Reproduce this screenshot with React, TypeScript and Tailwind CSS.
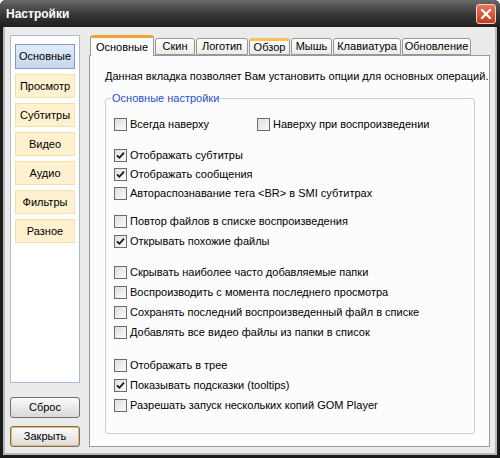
import React from 'react';

const navItems = ['Основные', 'Просмотр', 'Субтитры', 'Видео', 'Аудио', 'Фильтры', 'Разное'];

const tabs = [
  { label: 'Основные', w: 'w-[64px]', active: true },
  { label: 'Скин', w: 'w-[40px]' },
  { label: 'Логотип', w: 'w-[52px]' },
  { label: 'Обзор', w: 'w-[41px]', hover: true },
  { label: 'Мышь', w: 'w-[41px]' },
  { label: 'Клавиатура', w: 'w-[68px]' },
  { label: 'Обновление', w: 'w-[69px]' },
];

function Box({ checked }: { checked?: boolean }) {
  return (
    <span className="w-[13px] h-[13px] border border-[#6b6b6b] bg-linear-to-br from-[#dedede] to-[#fbfbfb] flex items-center justify-center shrink-0">
      {checked && (
        <svg width="9" height="9" viewBox="0 0 9 9">
          <path d="M1 4.3 L3.4 6.8 L8 1.6" stroke="#141414" strokeWidth="1.7" fill="none" />
        </svg>
      )}
    </span>
  );
}

function Check({ label, checked, className = '' }: { label: string; checked?: boolean; className?: string }) {
  return (
    <label className={`flex items-center gap-[3px] ${className}`}>
      <Box checked={checked} />
      <span className="whitespace-nowrap">{label}</span>
    </label>
  );
}

export default function App() {
  return (
    <div className="w-[500px] h-[458px] bg-white font-['Liberation_Sans',Arial,sans-serif] text-[11px] text-black">
      <div className="w-full h-full bg-[#1b1b1b] rounded-t-[6px] flex flex-col">
        {/* Title bar */}
        <div className="h-[27px] shrink-0 rounded-t-[6px] bg-linear-to-b from-[#6a6a6a] via-[#3a3a3a] to-[#1e1e1e] flex items-center justify-between pl-[6px] pr-[4px]">
          <span className="text-white font-bold text-[12px]">Настройки</span>
          <button className="w-[20px] h-[20px] rounded-[3px] border border-[#f2d0c6] bg-linear-to-b from-[#e9765a] to-[#c7381d] flex items-center justify-center">
            <svg width="12" height="12" viewBox="0 0 12 12">
              <path d="M2 2 L10 10 M10 2 L2 10" stroke="white" strokeWidth="2.4" strokeLinecap="round" />
            </svg>
          </button>
        </div>

        {/* Body */}
        <div className="flex-1 mx-[3px] mb-[3px] border-2 border-t-0 border-[#b8b8b8] bg-[#ebebeb] flex pt-[8px] pb-[6px] pl-[5px] pr-[5px]">
          {/* Left column */}
          <div className="w-[70px] shrink-0 flex flex-col">
            <div className="flex-1 bg-white border border-[#a9bcd4] px-[4px] pt-[8px] flex flex-col gap-[5px]">
              {navItems.map((item, i) => (
                <div
                  key={item}
                  className={`flex items-center justify-center border ${
                    i === 0
                      ? 'h-[25px] bg-linear-to-b from-[#e3ebf7] to-[#c6d6ee] border-[#7d9bc4]'
                      : 'h-[24px] bg-[#fdf1cf] border-[#f6dfa7]'
                  }`}
                >
                  {item}
                </div>
              ))}
            </div>
            <button className="mt-[14px] h-[21px] rounded-[3px] border border-[#707070] bg-linear-to-b from-[#fbfbfb] to-[#d9d9d9]">
              Сброс
            </button>
            <button className="mt-[8px] h-[21px] rounded-[3px] border border-[#6f6f6f] bg-linear-to-b from-[#fbfbfb] to-[#dcdcdc] shadow-[inset_0_0_0_1px_#f4b454]">
              Закрыть
            </button>
          </div>

          {/* Right: tabs */}
          <div className="flex-1 min-w-0 ml-[9px] flex flex-col">
            <div className="flex items-end gap-[1px] h-[20px] pl-[1px] relative z-10">
              {tabs.map((t) => (
                <div
                  key={t.label}
                  className={`${t.w} shrink-0 flex items-center justify-center rounded-t-[3px] border-x border-[#919b9c] ${
                    t.active
                      ? 'h-[21px] -mb-[1px] bg-[#fcfcfe] border-t-[3px] border-t-[#f2a43a]'
                      : t.hover
                      ? 'h-[17px] bg-linear-to-b from-[#ffffff] to-[#ecebe5] border-t-[3px] border-t-[#f7c25a] border-b border-b-[#919b9c]'
                      : 'h-[17px] bg-linear-to-b from-[#ffffff] to-[#ecebe5] border-t border-t-[#919b9c] border-b border-b-[#919b9c]'
                  }`}
                >
                  {t.label}
                </div>
              ))}
            </div>
            <div className="flex-1 bg-[#fcfcfc] border border-[#919b9c] pl-[15px] pr-[14px] pt-[14px] pb-[12px] flex flex-col">
              <p className="leading-[13px] whitespace-nowrap">
                Данная вкладка позволяет Вам установить опции для основных операций.
              </p>
              <fieldset className="flex-1 mt-[9px] border border-[#d0d0bf] rounded-[3px] pl-[8px] pt-[9px]">
                <legend className="-ml-[3px] px-[1px] text-[#1f4fd0] leading-[13px]">Основные настройки</legend>
                <div className="flex h-[20px] items-center">
                  <Check label="Всегда наверху" className="w-[143px]" />
                  <Check label="Наверху при воспроизведении" />
                </div>

                <div className="mt-[12px] flex flex-col">
                  <Check label="Отображать субтитры" checked className="h-[19px]" />
                  <Check label="Отображать сообщения" checked className="h-[19px]" />
                  <Check label="Автораспознавание тега <BR> в SMI субтитрах" className="h-[19px]" />
                </div>

                <div className="mt-[8px] flex flex-col">
                  <Check label="Повтор файлов в списке воспроизведения" className="h-[20px]" />
                  <Check label="Открывать похожие файлы" checked className="h-[20px]" />
                </div>

                <div className="mt-[11px] flex flex-col">
                  <Check label="Скрывать наиболее часто добавляемые папки" className="h-[20px]" />
                  <Check label="Воспроизводить с момента последнего просмотра" className="h-[20px]" />
                  <Check label="Сохранять последний воспроизведенный файл в списке" className="h-[20px]" />
                  <Check label="Добавлять все видео файлы из папки в список" className="h-[20px]" />
                </div>

                <div className="mt-[13px] flex flex-col">
                  <Check label="Отображать в трее" className="h-[20px]" />
                  <Check label="Показывать подсказки (tooltips)" checked className="h-[20px]" />
                  <Check label="Разрешать запуск нескольких копий GOM Player" className="h-[20px]" />
                </div>
              </fieldset>
            </div>
          </div>
        </div>
      </div>
    </div>
  );
}
